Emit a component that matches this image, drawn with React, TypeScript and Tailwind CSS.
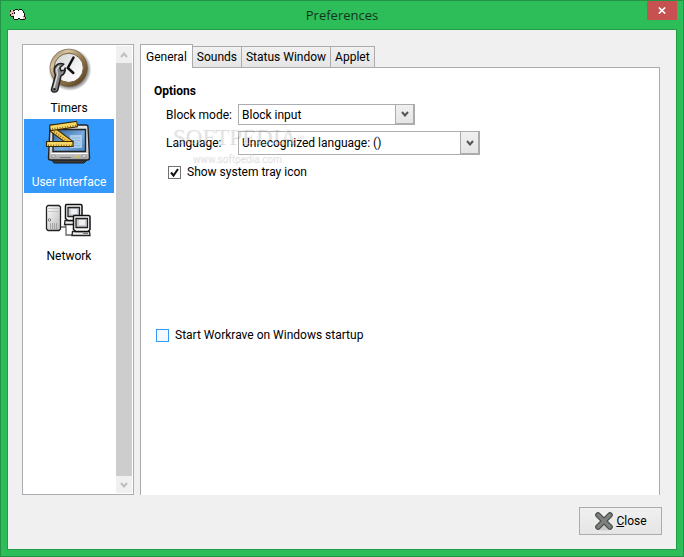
import React, { useState } from 'react';

// ==========================================
// --- ICONS ---
// ==========================================
function SheepIcon() {
    return (
        <svg className="w-4 h-3" viewBox="0 0 16 12" shapeRendering="crispEdges" aria-hidden="true">
            <path fill="#fff" d="M5 1h8v1H5zM4 2h10v5H4zM4 7h9v3H4z" />
            <path fill="#f3b9b5" d="M1 1h2v2H1zM1 3h3v4H1zM0 3h1v2H0zM13 8h2v2h-2z" />
            <path fill="#111" d="M5 0h3v1H5zM9 0h3v1H9zM3 1h2v1H3zM8 1h1v1H8zM12 1h1v1h-1zM13 2h1v2h-1zM14 4h1v4h-1zM0 1h1v2H0zM2 4h1v1H2zM4 3h1v2H4zM0 5h1v2H0zM1 7h3v1H1zM3 8h1v2H3zM4 10h4v1H4zM8 9h2v1H8zM10 10h5v1h-5zM15 8h1v2h-1z" />
        </svg>
    );
}

function TimersIcon() {
    return (
        <svg className="w-12 h-12" viewBox="0 0 48 48" aria-hidden="true">
            <defs>
                <linearGradient id="rim" x1="0" y1="0" x2="1" y2="1">
                    <stop offset="0" stopColor="#75603f" />
                    <stop offset="0.25" stopColor="#d9c7a4" />
                    <stop offset="0.55" stopColor="#94764a" />
                    <stop offset="1" stopColor="#4d3717" />
                </linearGradient>
                <linearGradient id="face" x1="0" y1="0" x2="1" y2="1">
                    <stop offset="0" stopColor="#cfcfcf" />
                    <stop offset="0.6" stopColor="#f4f4f4" />
                    <stop offset="1" stopColor="#ffffff" />
                </linearGradient>
                <radialGradient id="clockShade">
                    <stop offset="0.75" stopColor="#000" stopOpacity="0.6" />
                    <stop offset="1" stopColor="#000" stopOpacity="0" />
                </radialGradient>
            </defs>
            <circle cx="25" cy="23.5" r="21.5" fill="url(#clockShade)" />
            <circle cx="23.7" cy="21.8" r="18.6" fill="url(#rim)" stroke="#665139" strokeWidth="0.6" />
            <circle cx="23.7" cy="21.8" r="14.6" fill="url(#face)" stroke="#75603f" strokeWidth="1" />
            <path d="M28.500 11.500L22.800 22l5.500 5" fill="none" stroke="#111" strokeWidth="2.500" strokeLinecap="round" />
            <path
                d="M6.500 43.5L10.500 29C8 25.500 9 20.500 12.500 18.500C14.500 17.300 17 17.300 18.800 18.200L15 21.500L15.800 24.800L19.300 24.300L20.200 22C20.600 26 19 28.500 16 29.800L12.800 44C11.500 47.200 6 46.500 6.500 43.500z"
                fill="#8a8a8a"
                stroke="#222"
                strokeWidth="1.5"
                strokeLinejoin="round"
            />
            <path d="M9 42L12.500 28.500L11.500 23.500L14 20" fill="none" stroke="#ddd" strokeWidth="1.3" />
            <circle cx="9.500" cy="43.300" r="1.2" fill="#222" />
        </svg>
    );
}

function InterfaceIcon() {
    return (
        <svg className="w-12 h-12" viewBox="0 0 48 48" aria-hidden="true">
            <defs>
                <linearGradient id="screen" x1="0" y1="0" x2="1" y2="1">
                    <stop offset="0" stopColor="#2a5f9f" />
                    <stop offset="0.55" stopColor="#79abdc" />
                    <stop offset="1" stopColor="#4a82c2" />
                </linearGradient>
                <linearGradient id="shell" x1="0" y1="0" x2="0" y2="1">
                    <stop offset="0" stopColor="#e6e6e6" />
                    <stop offset="0.75" stopColor="#d6d6d6" />
                    <stop offset="1" stopColor="#a0a0a0" />
                </linearGradient>
            </defs>
            <path d="M6 39h37l-4 4H9z" fill="#3a3a3a" stroke="#1a1a1a" />
            <path d="M7 5h34q2 0 2 2l1.500 31q0 2-2 2h-37q-2 0-2-2L5 7q0-2 2-2z" fill="url(#shell)" stroke="#222" strokeWidth="1.4" />
            <path d="M8 9.500h32.500v22H8z" fill="url(#screen)" stroke="#222" strokeWidth="1.4" />
            <path d="M25 15h12v13H25z" fill="#c5ddf2" opacity="0.7" />
            <path d="M27 18h8M27 20.500h8M27 23h6M27 25.500h8" stroke="#8fb6dc" strokeWidth="1" />
            <path d="M6 33.500h36.500" stroke="#fff" />
            <path d="M7 35h3v2H7zM37 35h4v2h-4z" fill="#fff" stroke="#888" strokeWidth="0.8" />
            <path d="M15 37.500h11" stroke="#777" />
            <path d="M30 36.500h4" stroke="#d9c94a" strokeWidth="1.6" />
            <path d="M6 8.500L27 24" stroke="#3d2a00" strokeWidth="6.5" />
            <path d="M6.500 8.900L27 24" stroke="#f2c84b" strokeWidth="4.2" />
            <path d="M7 10L25 23.300" stroke="#775412" strokeWidth="1.6" strokeDasharray="0.8 1.8" />
            <path d="M4.500 8.100L32.500 4" stroke="#3d2a00" strokeWidth="6.6" />
            <path d="M5.500 7.900L31.600 4.100" stroke="#f8d866" strokeWidth="4.4" />
            <path d="M7 9L31 5.500" stroke="#775412" strokeWidth="1.6" strokeDasharray="0.8 1.8" />
            <path d="M1.500 21.500h26.500v5H1.500z" fill="#f8d866" stroke="#3d2a00" strokeWidth="1.2" />
            <path d="M3 25.200h24" stroke="#775412" strokeWidth="1.6" strokeDasharray="0.8 1.8" />
        </svg>
    );
}

function NetworkIcon() {
    return (
        <svg className="w-12 h-12" viewBox="0 0 48 48" aria-hidden="true">
            <defs>
                <linearGradient id="tower" x1="0" y1="0" x2="1" y2="1">
                    <stop offset="0" stopColor="#ffffff" />
                    <stop offset="1" stopColor="#b9b9b9" />
                </linearGradient>
            </defs>
            <path d="M16 33h5v8h7M20.500 33v-2" fill="none" stroke="#666" strokeWidth="1.3" />
            <path d="M3 11.500h11l1.500 1.500v22l-1.500 1.500H3L1.500 35V13z" fill="url(#tower)" stroke="#222" strokeWidth="1.3" />
            <path d="M3 14.500h11M3 17.500h11" stroke="#bbb" strokeWidth="0.8" />
            <circle cx="4.500" cy="26" r="1.2" fill="#fff" stroke="#555" strokeWidth="0.8" />
            <path d="M5.500 29v6M7.500 29v6M9.500 29v6M11.500 29v6" stroke="#999" strokeWidth="0.8" />
            <path d="M20 26.500h17v4H19.500z" fill="#eee" stroke="#222" strokeWidth="1.3" />
            <path d="M21.500 10.500h14q1.500 0 1.500 1.500v12.500l-2 2H23l-2.500-2V12q0-1.500 1-1.500z" fill="#fafafa" stroke="#111" strokeWidth="1.5" />
            <path d="M23 13.500h11.500v9H23z" fill="#c9cdd4" stroke="#222" strokeWidth="1.3" />
            <path d="M26 15h6v5h-6z" fill="#fff" opacity="0.7" />
            <path d="M27.500 37.500h17l0.500 4H27z" fill="#eee" stroke="#222" strokeWidth="1.3" />
            <path d="M29.500 21.500h14q1.500 0 1.500 1.500v12.500l-2 2H31l-2.500-2V23q0-1.500 1-1.500z" fill="#fafafa" stroke="#111" strokeWidth="1.5" />
            <path d="M31 24.500h11.500v9H31z" fill="#c9cdd4" stroke="#222" strokeWidth="1.3" />
            <path d="M34 26h6v5h-6z" fill="#fff" opacity="0.7" />
            <path d="M38 39.500h5" stroke="#777" />
        </svg>
    );
}

function CrossIcon() {
    return (
        <svg className="w-5 h-5" viewBox="0 0 20 20" aria-hidden="true">
            <ellipse cx="10" cy="17" rx="8" ry="2.5" fill="#000" opacity="0.12" />
            <path d="M4 4L16 16M16 4L4 16" stroke="#444744" strokeWidth="5.6" strokeLinecap="round" />
            <path d="M4 4L16 16M16 4L4 16" stroke="#7d807d" strokeWidth="3.4" strokeLinecap="round" />
        </svg>
    );
}

function Chevron({ up, className }: any) {
    return (
        <svg className={className} viewBox="0 0 8 6" aria-hidden="true">
            <path d={up ? "M1 5L4 1.5L7 5" : "M1 1L4 4.5L7 1"} fill="none" stroke="currentColor" strokeWidth="2" />
        </svg>
    );
}

// ==========================================
// --- FORM CONTROLS ---
// ==========================================
function ComboBox({ id, value, className }: any) {
    return (
        <div className={`relative ${className}`}>
            <select
                id={id}
                defaultValue={value}
                className="block w-full h-full appearance-none border border-[#abadb3] bg-white pl-[3px] pr-5 text-black outline-none"
            >
                <option>{value}</option>
            </select>
            <span className="pointer-events-none absolute inset-y-0 right-0 w-5 flex items-center justify-center border border-r-2 border-b-2 border-[#acacac] bg-linear-to-b from-[#f0f0f0] to-[#e5e5e5] text-[#555]">
                <Chevron className="w-2 h-[6px]" />
            </span>
        </div>
    );
}

const sections = [
    { name: "Timers", icon: <TimersIcon /> },
    { name: "User interface", icon: <InterfaceIcon /> },
    { name: "Network", icon: <NetworkIcon /> },
];

const tabs = ["General", "Sounds", "Status Window", "Applet"];

export default function App() {
    const [section, setSection] = useState("User interface");
    const [tab, setTab] = useState("General");
    const [trayIcon, setTrayIcon] = useState(true);
    const [autostart, setAutostart] = useState(false);

    return (
        <div className="min-h-screen flex flex-col border border-[#239446] bg-[#2dbd59] px-[6px] pb-[6px] font-['Roboto',sans-serif] text-[12px] leading-4 text-black">

            {/* Title bar */}
            <header className="grid grid-cols-[1fr_auto_1fr] h-7">
                <div className="flex items-center pl-[3px]">
                    <SheepIcon />
                </div>
                <h1 className="self-center font-['Open_Sans',sans-serif] text-[13px] text-[#10351c]">Preferences</h1>
                <button aria-label="Close window" className="justify-self-end w-[30px] h-[19px] flex items-center justify-center bg-[#c75050]">
                    <svg className="w-2 h-[7px]" viewBox="0 0 8 7" aria-hidden="true">
                        <path d="M0.8 0.5L7.2 6.5M7.2 0.5L0.8 6.5" stroke="#fff" strokeWidth="1.7" />
                    </svg>
                </button>
            </header>

            <main className="flex-1 flex flex-col gap-3 border border-[#239c48] bg-[#f0f0f0] p-[14px]">
                <div className="flex-1 flex gap-[6px] pr-[2px]">

                    {/* Section list */}
                    <nav className="w-28 shrink-0 flex justify-between border border-[#abadb3] bg-white pl-px">
                        <div className="w-[90px]">
                            {sections.map((s) => (
                                <button
                                    key={s.name}
                                    onClick={() => setSection(s.name)}
                                    className={`w-full h-[74px] flex flex-col items-center pt-px ${section === s.name ? 'bg-[#3399ff] text-white' : ''}`}
                                >
                                    {s.icon}
                                    <span className="pt-[6px] whitespace-nowrap">{s.name}</span>
                                </button>
                            ))}
                        </div>
                        <div className="w-[17px] flex flex-col py-px pr-px">
                            <span className="h-[17px] flex items-center justify-center bg-[#f0f0f0] text-[#bfbfbf]">
                                <Chevron up className="w-2 h-[6px]" />
                            </span>
                            <span className="flex-1 bg-[#cdcdcd]" />
                            <span className="h-[17px] flex items-center justify-center bg-[#f0f0f0] text-[#bfbfbf]">
                                <Chevron className="w-2 h-[6px]" />
                            </span>
                        </div>
                    </nav>

                    {/* Notebook */}
                    <div className="flex-1 flex flex-col">
                        <div role="tablist" className="flex items-end h-6 -mb-px">
                            {tabs.map((t) => (
                                <button
                                    key={t}
                                    role="tab"
                                    aria-selected={tab === t}
                                    onClick={() => setTab(t)}
                                    className={tab === t
                                        ? "relative z-10 h-6 border border-b-0 border-[#acacac] bg-white px-[5px]"
                                        : "h-[22px] border border-l-0 border-[#acacac] bg-linear-to-b from-[#f0f0f0] to-[#e5e5e5] px-1"}
                                >
                                    {t}
                                </button>
                            ))}
                        </div>
                        <section className="relative flex-1 border border-b-0 border-[#acacac] bg-white px-[13px] pt-[15px]">
                            <h2 className="font-bold">Options</h2>
                            <div className="grid grid-cols-[72px_1fr] gap-y-[6px] items-center pl-3 pt-[5px]">
                                <label htmlFor="block-mode">Block mode:</label>
                                <ComboBox id="block-mode" value="Block input" className="w-[177px] h-[21px]" />
                                <label htmlFor="language">Language:</label>
                                <ComboBox id="language" value="Unrecognized language: ()" className="w-[242px] h-6" />
                            </div>
                            <label className="flex items-center gap-[6px] pl-[14px] pt-[9px]">
                                <span className="relative flex">
                                    <input
                                        type="checkbox"
                                        checked={trayIcon}
                                        onChange={(e) => setTrayIcon(e.target.checked)}
                                        className="w-[13px] h-[13px] appearance-none border border-[#707070] bg-white"
                                    />
                                    {trayIcon && (
                                        <svg className="pointer-events-none absolute inset-0 w-[13px] h-[13px]" viewBox="0 0 13 13" aria-hidden="true">
                                            <path d="M3 6.5L5.5 9.5L10 3" fill="none" stroke="#111" strokeWidth="2" />
                                        </svg>
                                    )}
                                </span>
                                Show system tray icon
                            </label>
                            <label className="flex items-center gap-[6px] pl-[2px] pt-[147px]">
                                <input
                                    type="checkbox"
                                    checked={autostart}
                                    onChange={(e) => setAutostart(e.target.checked)}
                                    className="w-[13px] h-[13px] appearance-none border border-[#3399ff] bg-[#f3f9ff] checked:bg-[#3399ff]"
                                />
                                Start Workrave on Windows startup
                            </label>

                            {/* Watermark */}
                            <div className="pointer-events-none absolute left-[31px] top-[55px] text-white/30 [text-shadow:1px_1px_1px_rgba(0,0,0,0.16)]">
                                <p className="font-['Liberation_Serif',serif] text-[23px] leading-7">SOFTPEDIA<sup className="text-[8px]">™</sup></p>
                                <p className="font-['Roboto',sans-serif] text-[10px] leading-4 pl-5">www.softpedia.com</p>
                            </div>
                        </section>
                    </div>
                </div>

                <button className="self-end w-[83px] h-7 flex items-center justify-center gap-[2px] border border-[#acacac] bg-linear-to-b from-[#f0f0f0] to-[#e5e5e5]">
                    <CrossIcon />
                    <span><u>C</u>lose</span>
                </button>
            </main>
        </div>
    );
}
